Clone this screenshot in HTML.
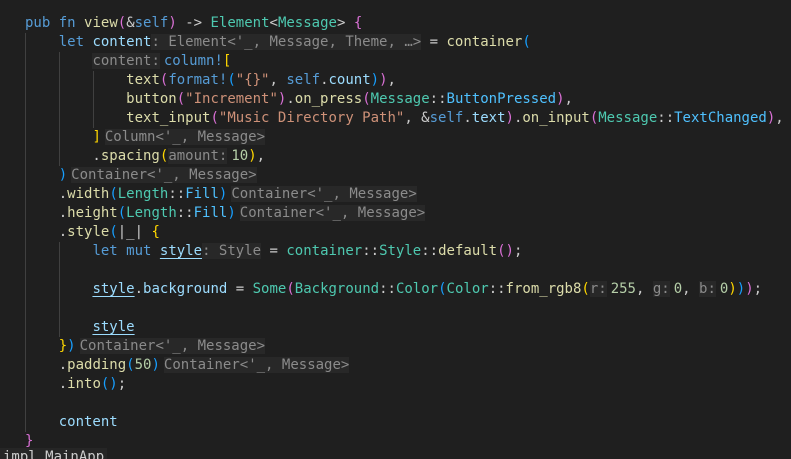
<!DOCTYPE html>
<html><head><meta charset="utf-8"><style>
html,body{margin:0;padding:0;background:#1f1f1f;width:791px;height:459px;overflow:hidden;}
#ed{position:relative;width:791px;height:459px;font-family:"DejaVu Sans Mono","Liberation Mono",monospace;font-size:14px;color:#cccccc;}
#w{position:absolute;left:0;top:2px;width:791px;height:459px;}
.l{position:absolute;left:25px;height:19px;line-height:19px;white-space:pre;}
.g{position:absolute;width:1px;background:#404040;}
.k{color:#569cd6}.v{color:#9cdcfe}.f{color:#dcdcaa}.t{color:#4ec9b0}.s{color:#ce9178}.n{color:#b5cea8}.e{color:#4fc1ff}
.b1{color:#ffd700}.b2{color:#da70d6}.b3{color:#179fff}
.h{background:#282828;color:#8b8b8b;}
.hl{margin-left:4px}.hr{margin-right:4px}
.u{text-decoration:underline;text-decoration-color:#9cdcfe;text-underline-offset:3px}
</style></head><body><div id="ed"><div id="w">
<div class="g" style="left:25px;top:31px;height:399px"></div>
<div class="g" style="left:59px;top:50px;height:114px"></div>
<div class="g" style="left:93px;top:69px;height:57px"></div>
<div class="g" style="left:59px;top:240px;height:95px"></div>
<div class="l" style="top:12px"><span class="k">pub</span> <span class="k">fn</span> <span class="f">view</span><span class="b2">(</span>&amp;<span class="k">self</span><span class="b2">)</span> -&gt; <span class="t">Element</span>&lt;<span class="t">Message</span>&gt; <span class="b2">{</span></div>
<div class="l" style="top:31px">    <span class="k">let</span> <span class="v">content</span><span class="h">: Element&lt;'_, Message, Theme, …&gt;</span> = <span class="f">container</span><span class="b3">(</span></div>
<div class="l" style="top:50px">        <span class="h hr">content:</span><span class="k">column!</span><span class="b1">[</span></div>
<div class="l" style="top:69px">            <span class="f">text</span><span class="b2">(</span><span class="k">format!</span><span class="b3">(</span><span class="s">"{}"</span>, <span class="k">self</span>.<span class="v">count</span><span class="b3">)</span><span class="b2">)</span>,</div>
<div class="l" style="top:88px">            <span class="f">button</span><span class="b2">(</span><span class="s">"Increment"</span><span class="b2">)</span>.<span class="f">on_press</span><span class="b2">(</span><span class="t">Message</span>::<span class="e">ButtonPressed</span><span class="b2">)</span>,</div>
<div class="l" style="top:107px">            <span class="f">text_input</span><span class="b2">(</span><span class="s">"Music Directory Path"</span>, &amp;<span class="k">self</span>.<span class="v">text</span><span class="b2">)</span>.<span class="f">on_input</span><span class="b2">(</span><span class="t">Message</span>::<span class="e">TextChanged</span><span class="b2">)</span>,</div>
<div class="l" style="top:126px">        <span class="b1">]</span><span class="h hl">Column&lt;'_, Message&gt;</span></div>
<div class="l" style="top:145px">        .<span class="f">spacing</span><span class="b1">(</span><span class="h hr">amount:</span><span class="n">10</span><span class="b1">)</span>,</div>
<div class="l" style="top:164px">    <span class="b3">)</span><span class="h hl">Container&lt;'_, Message&gt;</span></div>
<div class="l" style="top:183px">    .<span class="f">width</span><span class="b3">(</span><span class="t">Length</span>::<span class="e">Fill</span><span class="b3">)</span><span class="h hl">Container&lt;'_, Message&gt;</span></div>
<div class="l" style="top:202px">    .<span class="f">height</span><span class="b3">(</span><span class="t">Length</span>::<span class="e">Fill</span><span class="b3">)</span><span class="h hl">Container&lt;'_, Message&gt;</span></div>
<div class="l" style="top:221px">    .<span class="f">style</span><span class="b3">(</span>|_| <span class="b1">{</span></div>
<div class="l" style="top:240px">        <span class="k">let</span> <span class="k">mut</span> <span class="v u">style</span><span class="h">: Style</span> = <span class="t">container</span>::<span class="t">Style</span>::<span class="f">default</span><span class="b2">()</span>;</div>
<div class="l" style="top:278px">        <span class="v u">style</span>.<span class="v">background</span> = <span class="t">Some</span><span class="b2">(</span><span class="t">Background</span>::<span class="t">Color</span><span class="b3">(</span><span class="t">Color</span>::<span class="f">from_rgb8</span><span class="b1">(</span><span class="h hr">r:</span><span class="n">255</span>, <span class="h hr">g:</span><span class="n">0</span>, <span class="h hr">b:</span><span class="n">0</span><span class="b1">)</span><span class="b3">)</span><span class="b2">)</span>;</div>
<div class="l" style="top:316px">        <span class="v u">style</span></div>
<div class="l" style="top:335px">    <span class="b1">}</span><span class="b3">)</span><span class="h hl">Container&lt;'_, Message&gt;</span></div>
<div class="l" style="top:354px">    .<span class="f">padding</span><span class="b3">(</span><span class="n">50</span><span class="b3">)</span><span class="h hl">Container&lt;'_, Message&gt;</span></div>
<div class="l" style="top:373px">    .<span class="f">into</span><span class="b3">()</span>;</div>
<div class="l" style="top:411px">    <span class="v">content</span></div>
<div class="l" style="top:430px"><span class="b2">}</span></div>
</div>
<div class="l" style="top:448px;left:0;height:11px;overflow:hidden;background:#262626;padding:0 3px;color:#cccccc">impl MainApp</div>
</div></body></html>
